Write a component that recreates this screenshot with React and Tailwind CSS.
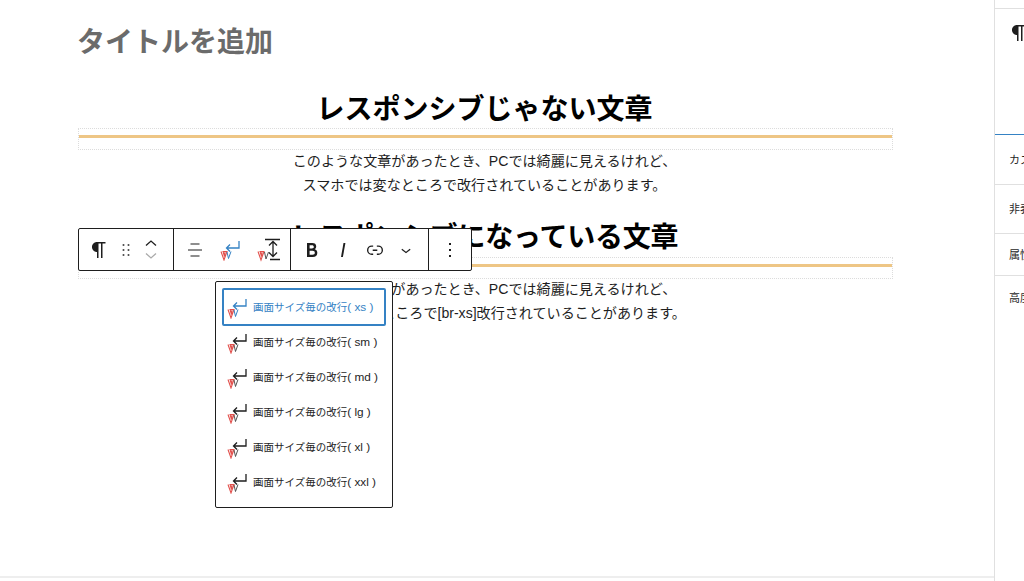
import React from 'react';

const font = { fontFamily: '"Liberation Sans", "Noto Sans CJK JP", sans-serif' };

const WpIcon = ({ d, size = 24, className = '' }) => (
  <svg width={size} height={size} viewBox="0 0 24 24" fill="currentColor" className={className}>
    <path d={d} />
  </svg>
);

const paragraph = 'm9.99609 14v-.2251l.00391.0001v6.225h1.5v-14.5h2.5v14.5h1.5v-14.5h3v-1.5h-8.50391c-2.76142 0-5 2.23858-5 5 0 2.7614 2.23858 5 5 5z';
const drag = 'M8 7h2V5H8v2zm0 6h2v-2H8v2zm0 6h2v-2H8v2zm6-14v2h2V5h-2zm0 8h2v-2h-2v2zm0 6h2v-2h-2v2z';
const bold = 'M14.7 11.3c1-.6 1.5-1.6 1.5-3 0-2.3-1.3-3.4-4-3.4H7v14h5.8c1.4 0 2.5-.3 3.3-1 .8-.7 1.2-1.7 1.2-2.9.1-1.9-.8-3.3-2.6-3.7zm-5.1-4h2.3c.6 0 1.1.1 1.4.4.3.3.5.7.5 1.2s-.2 1-.5 1.2c-.3.3-.8.4-1.4.4H9.6V7.3zm4.6 9c-.4.3-1 .4-1.7.4H9.6v-3.9h2.9c.7 0 1.3.2 1.7.5.4.3.6.8.6 1.5s-.2 1.2-.6 1.5z';
const italic = 'M12.5 5L10 19h1.9l2.5-14z';
const link = 'M10 17.389H8.444A5.194 5.194 0 1 1 8.444 7H10v1.5H8.444a3.694 3.694 0 0 0 0 7.389H10v1.5ZM14 7h1.556a5.194 5.194 0 0 1 0 10.39H14v-1.5h1.556a3.694 3.694 0 0 0 0-7.39H14V7Zm-4.5 6h5v-1.5h-5V13Z';
const chevronDown = 'M17.5 11.6L12 16l-5.5-4.4.9-1.2L12 14l4.5-3.6 1 1.2z';
const more = 'M13 19h-2v-2h2v2zm0-6h-2v-2h2v2zm0-6h-2V5h2v2z';

// return arrow with the small red check mark used by the line break plugin
const BreakIcon = ({ active = false }) => (
  <svg width="22" height="22" viewBox="0 0 22 22" fill="none">
    <path
      d="M19 2v7H6.5M10 5.5 6.5 9 10 12.5"
      stroke={active ? '#3582c4' : '#1e1e1e'}
      strokeWidth="1.3"
    />
    <path d="M1 12.5 4 21 7 12.5H2.5M3.2 13 4.5 17.5M5 13 4.5 17" stroke="#e2504c" strokeWidth="1.1" />
    <path d="M7 13 8.5 19.5 11 12.5" stroke={active ? '#3582c4' : '#555'} strokeWidth="1" />
  </svg>
);

const LineHeightIcon = () => (
  <svg width="28" height="24" viewBox="0 0 28 24" fill="none">
    <path d="M9 1.5h15M14 21.5h10" stroke="#1e1e1e" strokeWidth="1.4" />
    <path d="M17 3.5v15M13 7.5l4-4 4 4M13 14.5l4 4 4-4" stroke="#1e1e1e" strokeWidth="1.3" />
    <path d="M2 13.5 5 22 8 13.5H3.5M4.2 14 5.5 18.5M6 14 5.5 18" stroke="#e2504c" strokeWidth="1.1" />
    <path d="M8.5 14 10 21 12.5 14" stroke="#555" strokeWidth="1" />
  </svg>
);

const Separator = ({ className = '' }) => (
  <div className={`h-[22px] border border-dotted border-[#dcdcdc] pt-[6px] ${className}`}>
    <div className="h-[3px] bg-[#eec685]" />
  </div>
);

const Section = ({ heading, lines, second = false }) => (
  <section>
    <h2
      className={`h-[40px] pr-[2px] text-center text-[28px] leading-[44px] font-bold text-black ${
        second ? 'tracking-[-0.2px]' : ''
      }`}
    >
      {heading}
    </h2>
    <Separator className={second ? 'mt-px' : ''} />
    <div className={`pr-[2px] text-center text-[14.08px] leading-[24px] text-[#1e1e1e] ${second ? '-mt-[2px]' : '-mt-px'}`}>
      {lines.map((line) => (
        <p key={line}>{line}</p>
      ))}
    </div>
  </section>
);

const Toolbar = () => (
  <div className="absolute top-[228px] left-[78px] flex h-[43px] w-[394px] rounded-[2px] border border-[#1e1e1e] bg-white text-[#1e1e1e]">
    <div className="flex w-[95px] items-center border-r border-[#1e1e1e] pl-[8px]">
      <WpIcon d={paragraph} />
      <WpIcon d={drag} size={20} className="ml-[5px]" />
      <div className="ml-[7px] flex flex-col items-center">
        <svg width="16" height="8" viewBox="0 0 16 8" fill="none">
          <path d="M3 6.5 8 2l5 4.5" stroke="#1e1e1e" strokeWidth="1.3" />
        </svg>
        <svg width="16" height="8" viewBox="0 0 16 8" fill="none" className="mt-[5px]">
          <path d="M3 1.5 8 6l5-4.5" stroke="#aaa" strokeWidth="1.3" />
        </svg>
      </div>
    </div>
    <div className="flex w-[117px] items-center border-r border-[#1e1e1e] pl-[13px]">
      <svg width="16" height="16" viewBox="0 0 16 16" fill="none">
        <path d="M3.5 2h9M1 8h14M3.5 14h9" stroke="#1e1e1e" strokeWidth="1.2" />
      </svg>
      <div className="ml-[17px] flex">
        <BreakIcon active />
      </div>
      <div className="ml-[14px] flex">
        <LineHeightIcon />
      </div>
    </div>
    <div className="flex w-[138px] items-center border-r border-[#1e1e1e] pl-[9px]">
      <WpIcon d={bold} />
      <WpIcon d={italic} className="ml-[7px]" />
      <WpIcon d={link} size={22} className="ml-[9px]" />
      <WpIcon d={chevronDown} size={20} className="ml-[10px]" />
    </div>
    <div className="flex flex-1 items-center justify-center">
      <WpIcon d={more} />
    </div>
  </div>
);

const sizes = ['xs', 'sm', 'md', 'lg', 'xl', 'xxl'];

const BreakMenu = () => (
  <div className="absolute top-[281px] left-[215px] h-[227px] w-[178px] rounded-[2px] border border-[#1e1e1e] bg-white px-[6px] pt-[6px] text-[10.5px] text-[#1e1e1e]">
    {sizes.map((size, i) => (
      <div
        key={size}
        className={
          i === 0
            ? '-mb-px flex h-[38px] items-center rounded-[2px] border-2 border-[#3582c4] pt-[2px] pl-[3px] text-[#3582c4]'
            : 'flex h-[35px] items-center pl-[5px]'
        }
      >
        <BreakIcon active={i === 0} />
        <span className="ml-[4px] whitespace-nowrap">
          画面サイズ毎の改行<span className="text-[11.8px]">( {size} )</span>
        </span>
      </div>
    ))}
  </div>
);

const Sidebar = () => (
  <aside className="h-[581px] w-[30px] shrink-0 overflow-hidden border-l border-[#e0e0e0] pt-[8px] text-[11px] text-[#1e1e1e]">
    <div className="h-[127px] border-t border-b border-t-[#e0e0e0] border-b-[#3582c4] pt-[12px] pl-[12px]">
      <WpIcon d={paragraph} />
    </div>
    {[
      ['カスタム', 'h-[50px] leading-[50px]'],
      ['非表示', 'h-[49px] leading-[49px]'],
      ['属性', 'h-[42px] leading-[42px]'],
      ['高度な設定', 'h-[44px] leading-[44px]'],
    ].map(([label, size], i) => (
      <div
        key={label}
        className={`${size} whitespace-nowrap pl-[14px] ${i < 3 ? 'border-b border-[#e0e0e0]' : ''}`}
      >
        {label}
      </div>
    ))}
  </aside>
);

const App = () => {
  return (
    <div style={font} className="relative flex h-[581px] w-[1024px] overflow-hidden bg-white">
      <main className="h-[578px] flex-1 border-b-2 border-[#eeeeee] pr-[101px] pl-[78px]">
        <h1 className="mt-[21px] -ml-px h-[40px] text-[28px] leading-[44px] font-bold text-[#6b6b6b]">タイトルを追加</h1>
        <div className="mt-[27px] flex flex-col gap-[19px]">
          <Section
            heading="レスポンシブじゃない文章"
            lines={['このような文章があったとき、PCでは綺麗に見えるけれど、', 'スマホでは変なところで改行されていることがあります。']}
          />
          <Section
            second
            heading="レスポンシブになっている文章"
            lines={['このような文章があったとき、PCでは綺麗に見えるけれど、', 'スマホでは変なところで[br-xs]改行されていることがあります。']}
          />
        </div>
      </main>
      <Sidebar />
      <Toolbar />
      <BreakMenu />
    </div>
  );
};

export default App;
